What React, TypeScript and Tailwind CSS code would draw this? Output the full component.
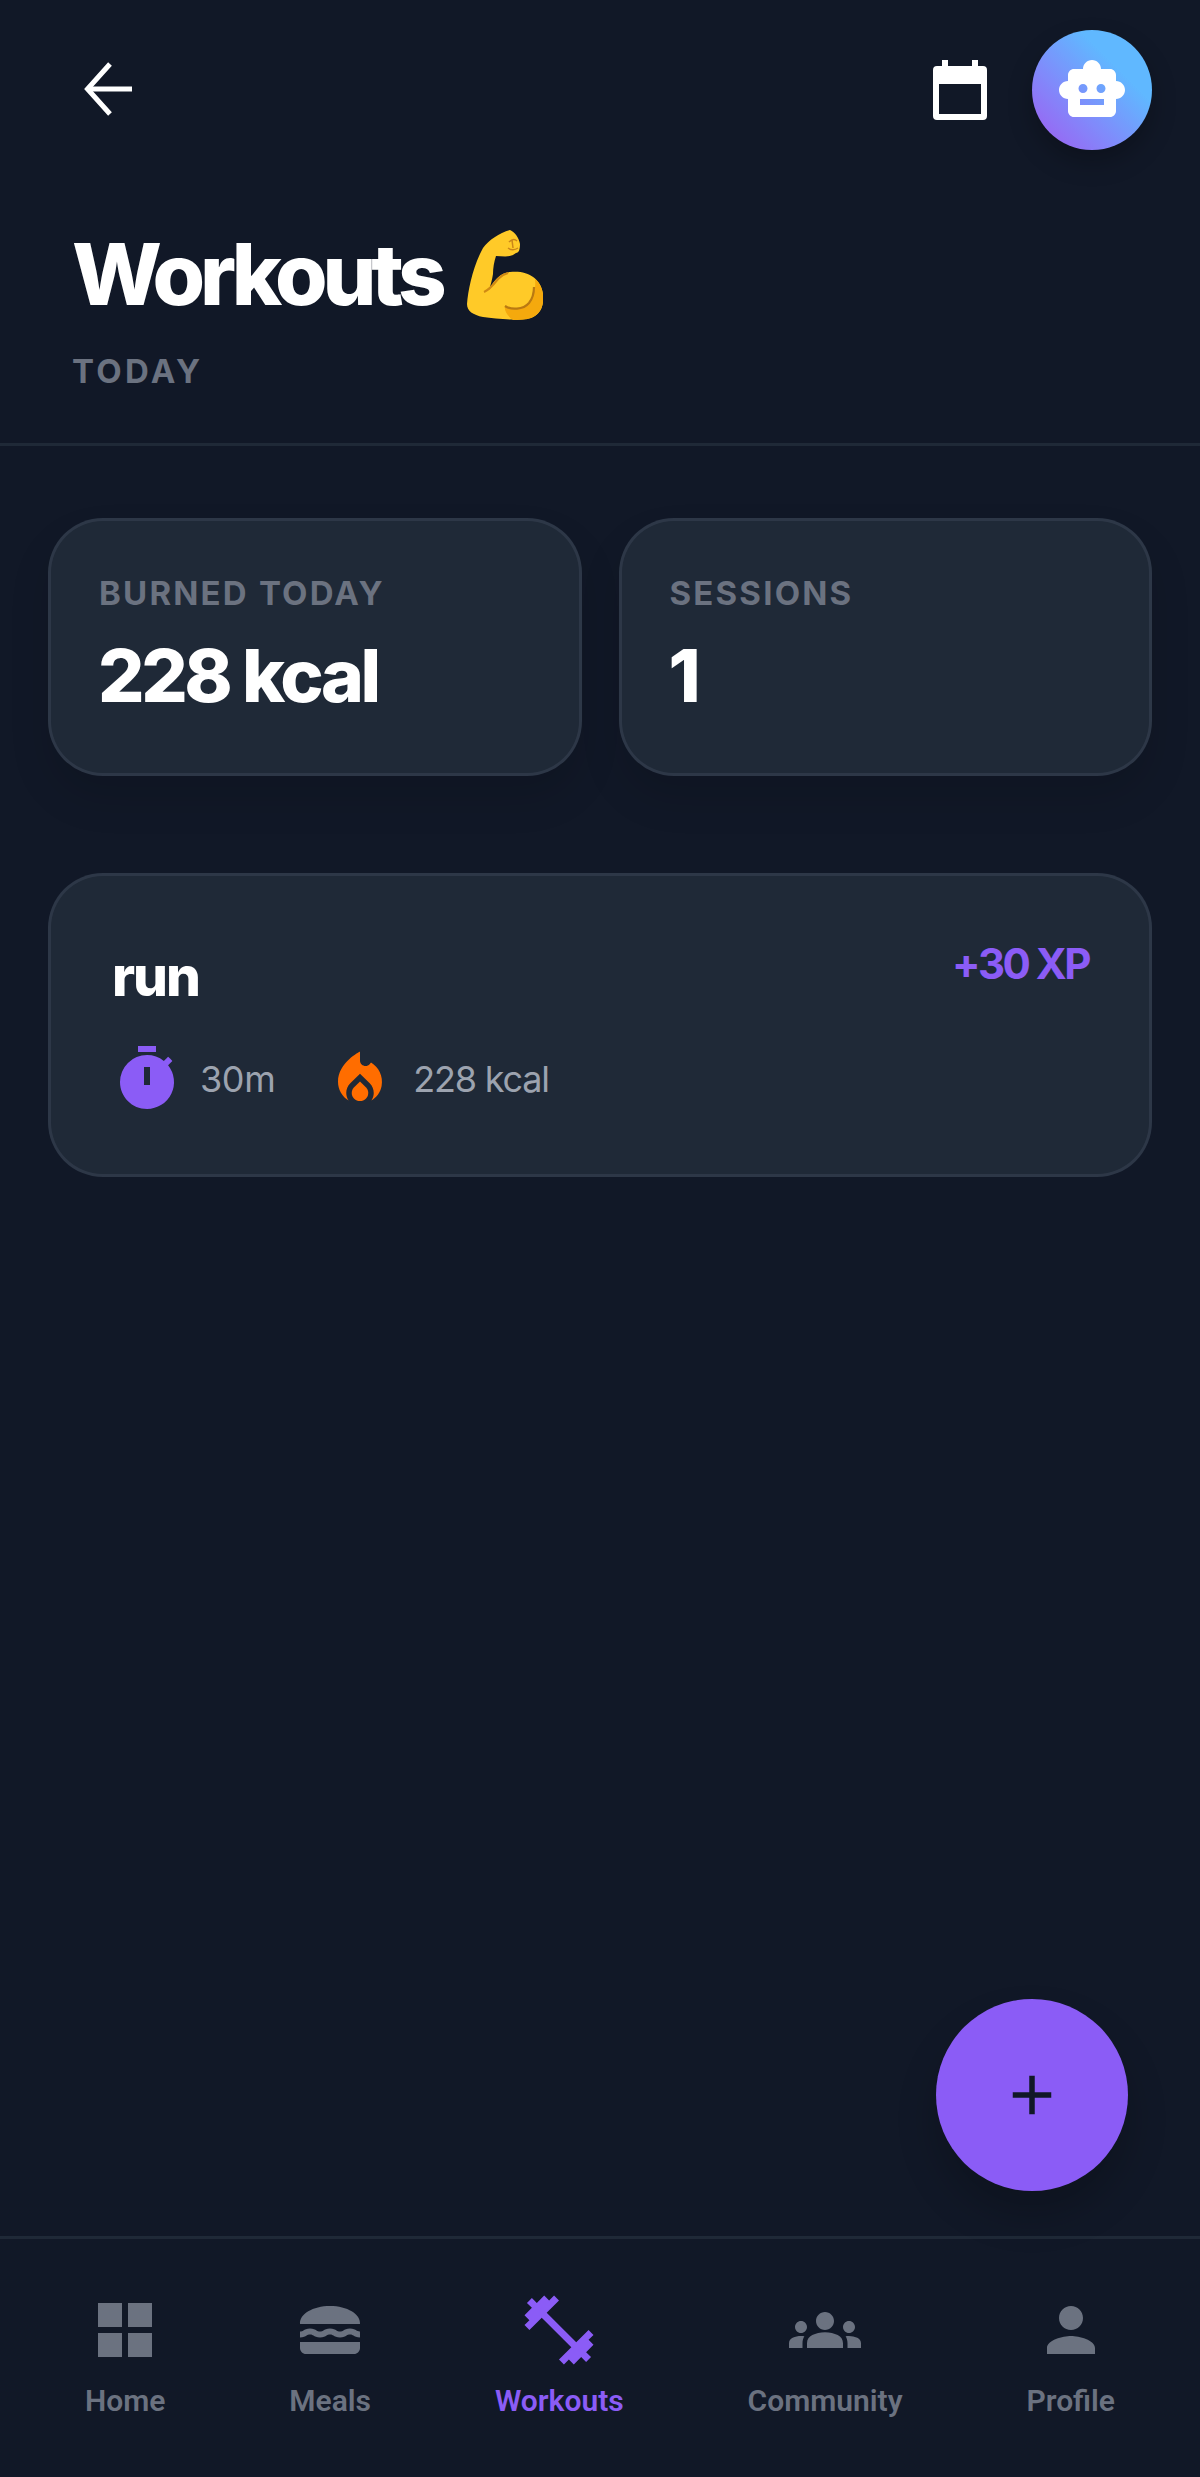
import type { ComponentType } from 'react';
import { MdAdd, MdGroups, MdLocalFireDepartment, MdLunchDining, MdPerson, MdSmartToy, MdTimer, MdFitnessCenter } from 'react-icons/md';

const HomeGrid = ({ className }: { className?: string }) => (
  <svg viewBox="0 0 72 72" className={className} fill="currentColor">
    <rect x="9" y="9" width="24" height="24" />
    <rect x="39" y="9" width="24" height="24" />
    <rect x="9" y="39" width="24" height="24" />
    <rect x="39" y="39" width="24" height="24" />
  </svg>
);

const Dumbbell = ({ className }: { className?: string }) => (
  <MdFitnessCenter className={`${className} scale-[1.15]`} />
);

const tabs: { name: string; icon: ComponentType<{ className?: string }>; active?: boolean }[] = [
  { name: 'Home', icon: HomeGrid },
  { name: 'Meals', icon: MdLunchDining },
  { name: 'Workouts', icon: Dumbbell, active: true },
  { name: 'Community', icon: MdGroups },
  { name: 'Profile', icon: MdPerson },
];

const BackArrow = () => (
  <svg viewBox="0 0 48 56" className="w-[48px] h-[56px] -mt-[3px]" fill="none" stroke="white" strokeWidth="5">
    <path d="M49 28H4" />
    <path d="M26 3 3.5 28 26 53" />
  </svg>
);

const CalendarIcon = () => (
  <svg viewBox="0 0 54 60" className="w-[54px] h-[60px]">
    <path
      fillRule="evenodd"
      fill="white"
      d="M9 0h6v6h24V0h6v6h5a4 4 0 0 1 4 4v46a4 4 0 0 1-4 4H4a4 4 0 0 1-4-4V10a4 4 0 0 1 4-4h5V0ZM6 24v30h42V24H6Z"
    />
  </svg>
);

const MuscleEmoji = () => (
  <svg viewBox="0 0 76 90" className="w-[76px] h-[90px]">
    <path
      d="M43 0C48 2 52 8 53 14 53 19 52 23 49 23 43 28 36 26 29 26 27 32 26 38 26 44 25 50 24 54 22 60 27 50 33 43 43 42 60 40 74 48 76 64 77 76 74 84 64 88 52 91 30 89 16 87 6 85 0 81 0 74 1 60 6 36 16 18 22 10 32 3 43 0Z"
      fill="#ffca28"
    />
    <path d="M68 49C73 53 75 58 76 64 77 76 74 84 64 88 58 90 52 90 46 90 40 86 37 80 38 76 44 80 56 80 62 73 67 67 69 58 68 49Z" fill="#f5a90d" />
    <path d="M38 76C44 80 56 80 62 73 66 68 67 63 67 57" fill="none" stroke="#b97912" strokeWidth="2.2" />
    <path d="M17 62C22 60 27 54 31 49 34 46 37 44 41 43" fill="none" stroke="#d08a14" strokeWidth="2.2" />
    <path d="M42 12C45 9 48 9 50 11M41 18C44 20 48 20 51 18M45 10 46 18" fill="none" stroke="#c9851a" strokeWidth="1.5" />
  </svg>
);

const StatCard = ({ label, value }: { label: string; value: string }) => (
  <div className="flex-1 h-[258px] rounded-[55px] bg-[#1f2937] border-[3px] border-[#374151]/60 pl-[48px] pt-[50px] shadow-[0_22px_40px_rgba(0,0,0,0.12)]">
    <div className="text-[33px] leading-[44px] font-bold tracking-[2.2px] text-[#6b7280]">{label}</div>
    <div className="mt-[13px] -ml-[1px] text-[73px] leading-[96px] font-extrabold tracking-[-3.4px] text-white">{value}</div>
  </div>
);

export default function App() {
  return (
    <div className="relative h-[2477px] flex flex-col bg-[#111827] font-['Inter',sans-serif]">
      <header className="border-b-[3px] border-[#1f2937] h-[446px] shrink-0">
        <div className="flex items-center justify-between pl-[84px] pr-[48px] pt-[30px]">
          <BackArrow />
          <div className="flex items-center gap-[45px]">
            <CalendarIcon />
            <div className="size-[120px] rounded-full bg-[linear-gradient(225deg,#60b8ff_30%,#7f8cfb_62%,#a259f0_100%)] flex items-center justify-center shadow-[0_12px_24px_rgba(0,0,0,0.25)]">
              <MdSmartToy className="size-[72px] text-white" />
            </div>
          </div>
        </div>
        <div className="flex items-center gap-[25px] pl-[72px] mt-[67px]">
          <h1 className="text-[85px] leading-[116px] font-extrabold tracking-[-5.2px] text-white">Workouts</h1>
          <MuscleEmoji />
        </div>
        <div className="pl-[72px] mt-[16px] text-[33px] leading-[44px] font-bold tracking-[3.3px] text-[#6b7280]">TODAY</div>
      </header>

      <main className="flex-1 px-[48px] pt-[72px]">
        <div className="flex gap-[37px]">
          <StatCard label="BURNED TODAY" value="228 kcal" />
          <StatCard label="SESSIONS" value="1" />
        </div>
        <div className="mt-[97px] h-[304px] rounded-[55px] bg-[#1f2937] border-[3px] border-[#374151]/60 pl-[61px] pr-[60px] pt-[64px]">
          <div className="flex justify-between items-start">
            <div className="text-[55px] leading-[72px] font-extrabold text-white tracking-[-2px]">run</div>
            <div className="text-[42px] leading-[56px] font-bold tracking-[-2.5px] text-[#8b5cf6] -mt-[4px]">+30 XP</div>
          </div>
          <div className="flex items-center mt-[31px]">
            <MdTimer className="size-[72px] text-[#8b5cf6] -ml-[1px]" />
            <span className="ml-[17px] text-[36px] leading-[50px] tracking-[-0.4px] text-[#9ca3af]">30m</span>
            <MdLocalFireDepartment className="size-[66px] text-[#ff6d00] ml-[52px]" />
            <span className="ml-[20px] text-[36px] leading-[50px] tracking-[-1.2px] text-[#9ca3af]">228 kcal</span>
          </div>
        </div>
      </main>

      <button className="absolute left-[936px] top-[1999px] size-[192px] rounded-full bg-[#8b5cf6] flex items-center justify-center shadow-[0_24px_40px_rgba(0,0,0,0.2)]">
        <MdAdd className="size-[66px] text-[#111827]" />
      </button>

      <nav className="h-[241px] shrink-0 border-t-[3px] border-[#1f2937] flex justify-around items-start px-[23px] pt-[55px]">
        {tabs.map((tab) => (
          <div key={tab.name} className={`flex flex-col items-center ${tab.active ? 'text-[#8b5cf6]' : 'text-[#6b7280]'}`}>
            <tab.icon className="size-[72px]" />
            <span className="mt-[15px] text-[30px] leading-[40px] font-semibold font-['Roboto',sans-serif]">{tab.name}</span>
          </div>
        ))}
      </nav>
    </div>
  );
}
